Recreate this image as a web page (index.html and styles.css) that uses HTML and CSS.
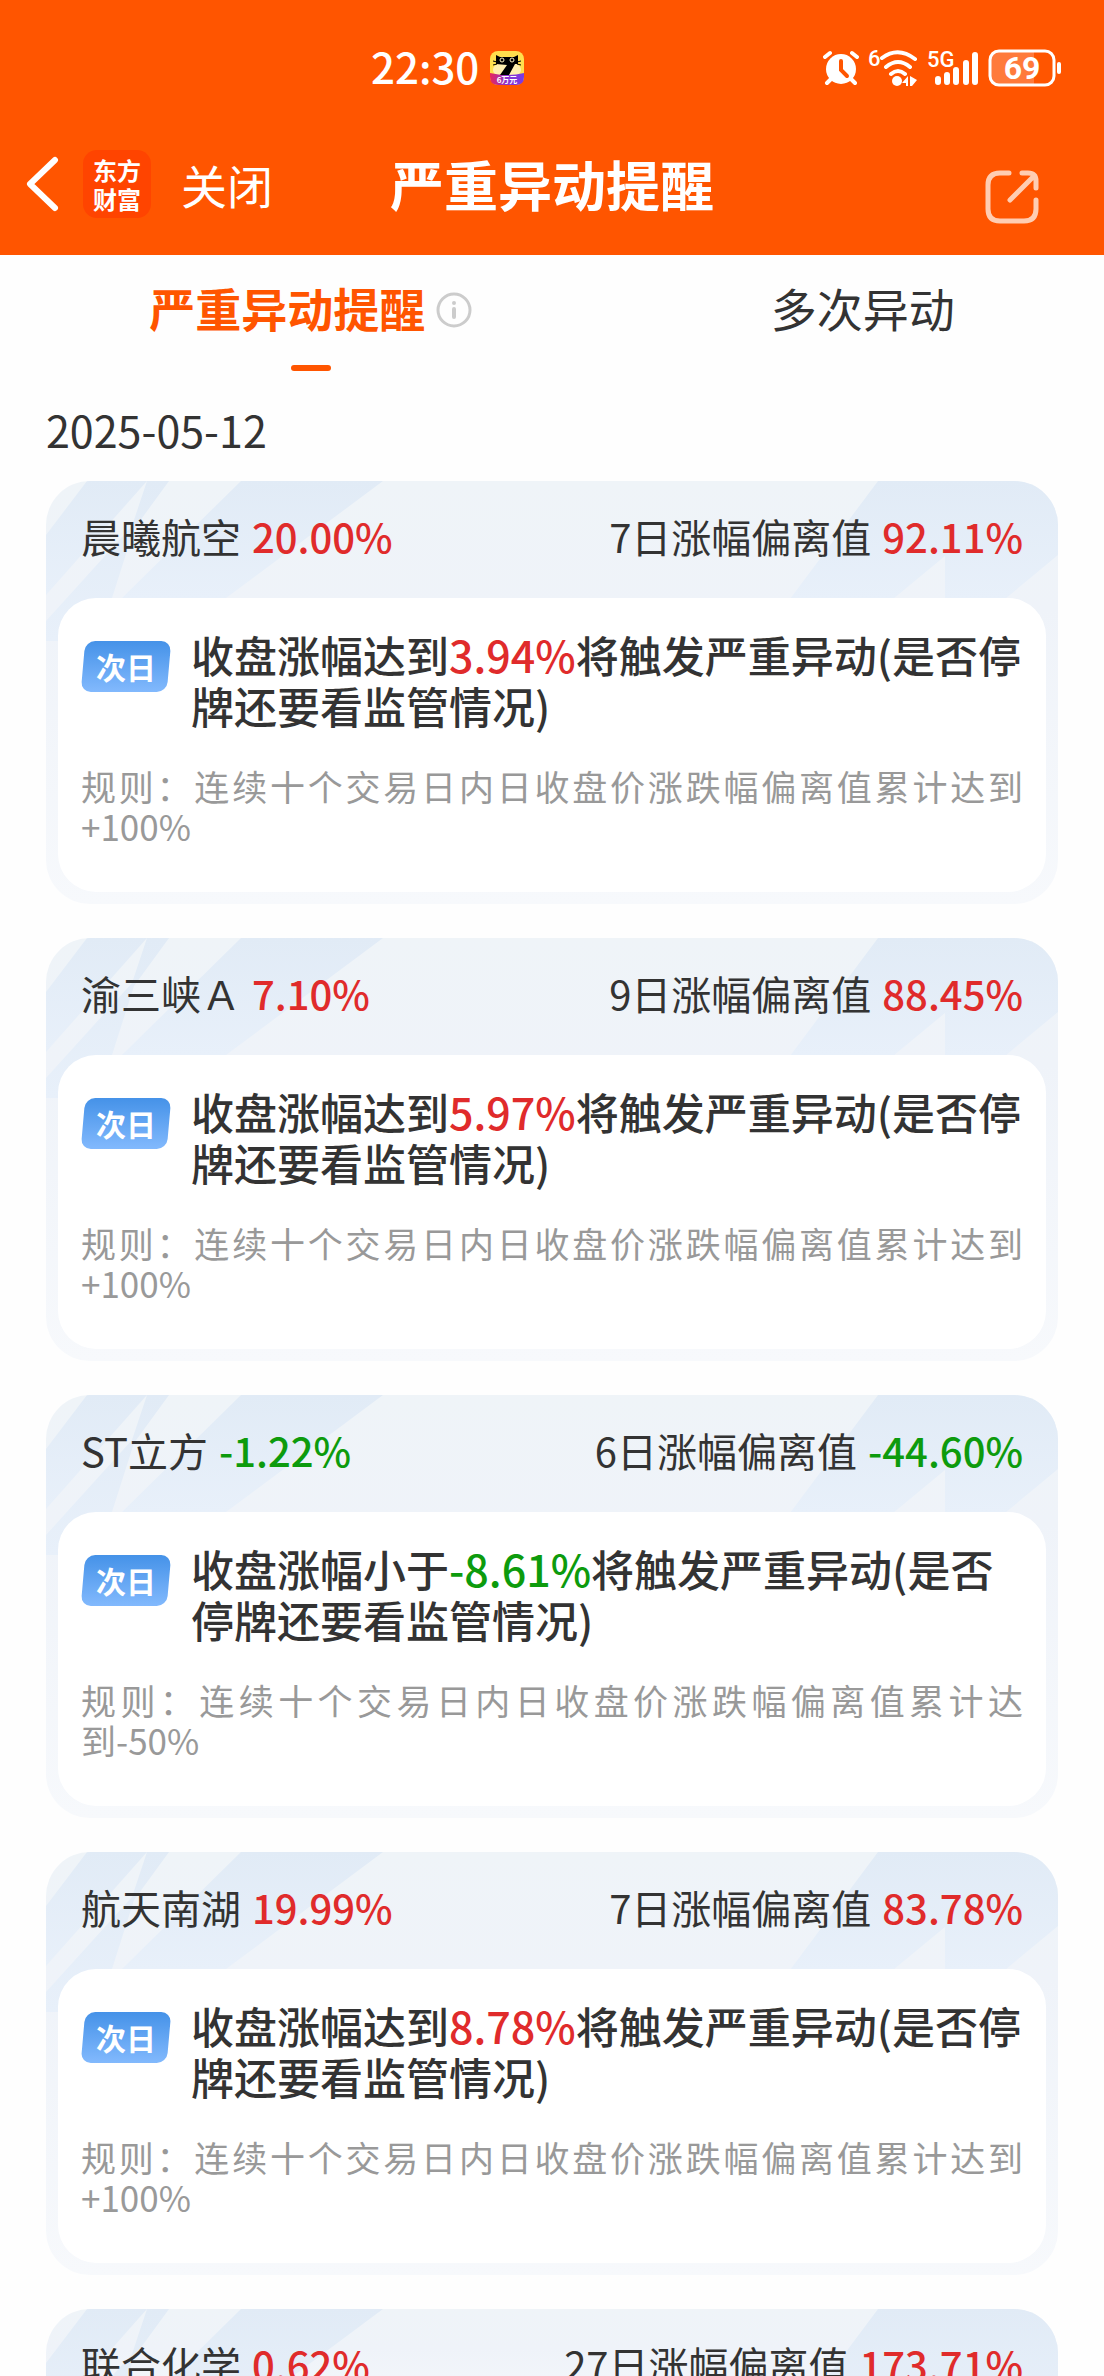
FILE: index.html
```html
<!DOCTYPE html>
<html lang="zh-CN">
<head>
    <meta charset="UTF-8">
    <meta name="viewport" content="width=device-width, initial-scale=1.0">
    <title>严重异动提醒</title>
    <link rel="stylesheet" href="styles.css">
</head>
<body>

<svg class="defs" width="0" height="0" aria-hidden="true">
    <defs>
        <linearGradient id="blue" x1="0" y1="0" x2="0" y2="1">
            <stop offset="0" stop-color="#e1ebf6"/>
            <stop offset="1" stop-color="#e8f0fa"/>
        </linearGradient>
    </defs>
    <symbol id="rays-left" viewBox="0 0 340 160">
        <path fill="url(#blue)" d="M41 0H101L0 114V54Z"/>
        <path fill="url(#blue)" d="M101 0H123L88 48L66 117V160H0V140L86 45Z"/>
        <path fill="url(#blue)" d="M195 0H337L180 117H76Z"/>
    </symbol>
    <symbol id="rays-right" viewBox="0 0 270 160">
        <path fill="url(#blue)" d="M90 0H270V74L217 118H157V75L105 118H2Z"/>
    </symbol>
</svg>

<header class="header">
    <div class="status">
        <div class="status-time">
            <span>22:30</span>
            <svg width="34" height="34" viewBox="0 0 34 34">
                <defs>
                    <linearGradient id="app" x1="0" y1="0" x2="1" y2="0">
                        <stop offset="0" stop-color="#e8265c"/>
                        <stop offset="0.5" stop-color="#8b32d0"/>
                        <stop offset="1" stop-color="#7a3be6"/>
                    </linearGradient>
                </defs>
                <rect width="34" height="34" rx="8" fill="#ffdf4e"/>
                <ellipse cx="17" cy="19" rx="14" ry="8" fill="#ffefb0"/>
                <path d="M0 22Q17 26 34 22V26Q34 34 26 34H8Q0 34 0 26Z" fill="url(#app)"/>
                <path d="M6 4L10 6H24L28 4V13H25L19 24H10L17 14L6 13Z" fill="#000"/>
                <path d="M3 10L7 11M3 14L7 13M31 10L27 11M31 14L27 13" stroke="#000"/>
                <circle cx="12" cy="9" r="2" fill="#000" stroke="#fff3c0"/>
                <circle cx="22" cy="9" r="2" fill="#000" stroke="#fff3c0"/>
                <text class="app-text" x="17" y="32" text-anchor="middle">6万元</text>
            </svg>
        </div>
        <div class="status-icons">
            <svg width="36" height="36" viewBox="0 0 36 36" fill="none" stroke="#fff" stroke-width="4" stroke-linecap="round">
                <circle cx="18" cy="19" r="15" fill="#fff" stroke="none"/>
                <path d="M2 7L7 3M34 7L29 3M8 29L4 33M28 29L32 33"/>
                <path stroke="#ff5500" d="M18 11V20L24 26"/>
            </svg>
            <svg class="wifi" width="50" height="38" viewBox="0 0 50 38" fill="none" stroke="#fff" stroke-width="4">
                <text class="net-text" x="0" y="17">6</text>
                <path stroke-linecap="round" d="M14 9Q30 -3 47 10M18 18Q30 8 42 18M23 25Q30 19 37 25"/>
                <circle cx="29" cy="32" r="5" fill="#fff" stroke="none"/>
                <path fill="#fff" stroke="none" d="M40 27V37H38V34H34ZM42 27L49 31L44 37H42Z"/>
            </svg>
            <svg class="signal" width="52" height="38" viewBox="0 0 52 38" fill="none" stroke="#fff" stroke-width="6" stroke-linecap="round">
                <text class="net-text" x="0" y="18">5G</text>
                <path d="M11 30V33M20 26V33M29 21V33M39 14V33M48 6V33"/>
            </svg>
            <svg width="74" height="38" viewBox="0 0 74 38">
                <path d="M10 1H46V37H10Q2 37 2 29V9Q2 1 10 1Z" fill="#ff7a3b"/>
                <rect x="2" y="2" width="64" height="34" rx="9" fill="none" stroke="#fff" stroke-width="3"/>
                <rect x="69" y="13" width="4" height="12" rx="2" fill="#fff"/>
                <text class="battery-text" x="34" y="30" text-anchor="middle">69</text>
            </svg>
        </div>
    </div>
    <div class="nav">
        <div class="nav-left">
            <button type="button" class="icon-button" aria-label="返回">
                <svg width="34" height="56" viewBox="0 0 34 56" fill="none" stroke="#fff" stroke-width="6" stroke-linecap="round" stroke-linejoin="round">
                    <path d="M29 4L4 28L29 52"/>
                </svg>
            </button>
            <span class="logo">东方<br>财富</span>
            <button type="button" class="close">关闭</button>
        </div>
        <h1 class="title">严重异动提醒</h1>
        <button type="button" class="icon-button share" aria-label="分享">
            <svg width="54" height="54" viewBox="0 0 54 54" fill="none" stroke="#ffcdb2" stroke-width="5" stroke-linecap="round" stroke-linejoin="round">
                <path d="M24 3H15Q3 3 3 15V39Q3 51 15 51H39Q51 51 51 39V30M37 3H43Q51 3 51 11V18M49 6L25 30"/>
            </svg>
        </button>
    </div>
</header>

<nav class="tabs">
    <a href="#" class="tab active">
        <span>严重异动提醒</span>
        <svg width="36" height="36" viewBox="0 0 36 36" fill="none" stroke="#ccc" stroke-width="3">
            <circle cx="18" cy="18" r="16"/>
            <path stroke-width="4" stroke-linecap="round" d="M18 17V25M18 11V11"/>
        </svg>
    </a>
    <a href="#" class="tab"><span>多次异动</span></a>
</nav>

<main class="list">
    <p class="date">2025-05-12</p>

    <article class="card">
        <svg class="rays left"><use href="#rays-left"/></svg>
        <svg class="rays right"><use href="#rays-right"/></svg>
        <div class="card-head">
            <span>晨曦航空 <b class="up">20.00%</b></span>
            <span>7日涨幅偏离值 <b class="up">92.11%</b></span>
        </div>
        <div class="card-body">
            <div class="message">
                <span class="badge">次日</span>
                <p>收盘涨幅达到<b class="up">3.94%</b>将触发严重异动(是否停牌还要看监管情况)</p>
            </div>
            <p class="rule">规则：连续十个交易日内日收盘价涨跌幅偏离值累计达到+100%</p>
        </div>
    </article>

    <article class="card">
        <svg class="rays left"><use href="#rays-left"/></svg>
        <svg class="rays right"><use href="#rays-right"/></svg>
        <div class="card-head">
            <span>渝三峡Ａ <b class="up">7.10%</b></span>
            <span>9日涨幅偏离值 <b class="up">88.45%</b></span>
        </div>
        <div class="card-body">
            <div class="message">
                <span class="badge">次日</span>
                <p>收盘涨幅达到<b class="up">5.97%</b>将触发严重异动(是否停牌还要看监管情况)</p>
            </div>
            <p class="rule">规则：连续十个交易日内日收盘价涨跌幅偏离值累计达到+100%</p>
        </div>
    </article>

    <article class="card">
        <svg class="rays left"><use href="#rays-left"/></svg>
        <svg class="rays right"><use href="#rays-right"/></svg>
        <div class="card-head">
            <span>ST立方 <b class="down">-1.22%</b></span>
            <span>6日涨幅偏离值 <b class="down">-44.60%</b></span>
        </div>
        <div class="card-body">
            <div class="message">
                <span class="badge">次日</span>
                <p>收盘涨幅小于<b class="down">-8.61%</b>将触发严重异动(是否停牌还要看监管情况)</p>
            </div>
            <p class="rule">规则：连续十个交易日内日收盘价涨跌幅偏离值累计达到-50%</p>
        </div>
    </article>

    <article class="card">
        <svg class="rays left"><use href="#rays-left"/></svg>
        <svg class="rays right"><use href="#rays-right"/></svg>
        <div class="card-head">
            <span>航天南湖 <b class="up">19.99%</b></span>
            <span>7日涨幅偏离值 <b class="up">83.78%</b></span>
        </div>
        <div class="card-body">
            <div class="message">
                <span class="badge">次日</span>
                <p>收盘涨幅达到<b class="up">8.78%</b>将触发严重异动(是否停牌还要看监管情况)</p>
            </div>
            <p class="rule">规则：连续十个交易日内日收盘价涨跌幅偏离值累计达到+100%</p>
        </div>
    </article>

    <article class="card">
        <svg class="rays left"><use href="#rays-left"/></svg>
        <svg class="rays right"><use href="#rays-right"/></svg>
        <div class="card-head">
            <span>联合化学 <b class="up">0.62%</b></span>
            <span>27日涨幅偏离值 <b class="up">173.71%</b></span>
        </div>
    </article>
</main>

</body>
</html>
```

FILE: styles.css
```css
* {
    box-sizing: border-box;
}
body {
    margin: 0;
    height: 100vh;
    overflow: hidden;
    background-color: #fefefe;
    color: #333;
    font-family: "Noto Sans CJK SC", sans-serif;
    font-size: 40px;
}
h1, p {
    margin: 0;
}
svg {
    display: block;
    flex: none;
}
.defs {
    position: absolute;
}
button {
    padding: 0;
    border: none;
    background: none;
    color: inherit;
    font-family: inherit;
    cursor: pointer;
}

/* header */
.header {
    background-color: #ff5500;
    color: #fff;
    padding-bottom: 23px;
}
.status {
    display: flex;
    justify-content: space-between;
    align-items: center;
    height: 136px;
    padding: 0 42px 0 371px;
}
.status-time {
    display: flex;
    align-items: center;
    gap: 11px;
    font-size: 42px;
    font-weight: 500;
}
.status-time span {
    padding-bottom: 6px;
}
.status-icons {
    display: flex;
    align-items: center;
    gap: 9px;
}
.net-text {
    font-size: 22px;
    font-weight: 500;
    fill: #fff;
    stroke: none;
    font-family: Roboto, sans-serif;
}
.battery-text {
    font-size: 32px;
    font-weight: 700;
    fill: #fff;
    font-family: Roboto, sans-serif;
}
.app-text {
    font-size: 8px;
    font-weight: 700;
    fill: #fff;
}
.nav {
    display: grid;
    grid-template-columns: 1fr auto 1fr;
    align-items: center;
    height: 96px;
    padding: 0 26px;
}
.nav-left {
    display: flex;
    align-items: center;
}
.logo {
    width: 68px;
    height: 68px;
    margin-left: 23px;
    padding-top: 5px;
    border-radius: 14px;
    background-color: #ff4400;
    font-size: 24px;
    font-weight: 700;
    line-height: 29px;
    text-align: center;
}
.close {
    margin-left: 30px;
    font-size: 46px;
    line-height: 60px;
}
.title {
    font-size: 54px;
    font-weight: 700;
    line-height: 80px;
}
.share {
    justify-self: end;
    margin: 26px 39px 0 0;
}

/* tabs */
.tabs {
    display: flex;
    justify-content: space-around;
    height: 126px;
}
.tab {
    display: flex;
    align-items: center;
    gap: 11px;
    position: relative;
    height: 110px;
    color: #333;
    font-size: 46px;
    text-decoration: none;
}
.tab span {
    padding-bottom: 6px;
}
.tab.active {
    color: #ff5500;
    font-weight: 700;
}
.tab.active::after {
    content: "";
    position: absolute;
    left: 50%;
    bottom: -6px;
    width: 40px;
    height: 6px;
    margin-left: -20px;
    border-radius: 3px;
    background-color: #ff5500;
}

/* list */
.list {
    padding: 0 46px;
}
.date {
    height: 100px;
    font-size: 43px;
    line-height: 96px;
}
.card {
    position: relative;
    overflow: hidden;
    margin-bottom: 34px;
    padding: 0 12px 12px;
    border-radius: 44px;
    background: linear-gradient(#eff4f8, #eff3f9 30%, #f7f9fc);
}
.rays {
    position: absolute;
    top: 0;
    height: 160px;
}
.rays.left {
    left: 0;
    width: 340px;
}
.rays.right {
    right: 0;
    width: 270px;
}
.card-head {
    position: relative;
    display: flex;
    justify-content: space-between;
    align-items: center;
    height: 117px;
    padding: 0 23px 8px;
}
.card-head b, .message b {
    font-weight: 500;
}
.card-head b {
    margin-left: 2px;
}
.card-body {
    position: relative;
    padding: 31px 23px 46px;
    border-radius: 38px;
    background-color: #fff;
}
.message {
    display: flex;
    align-items: flex-start;
    gap: 20px;
    font-size: 43px;
    font-weight: 500;
    line-height: 51px;
}
.badge {
    position: relative;
    z-index: 0;
    flex: none;
    width: 90px;
    margin-top: 12px;
    color: #fff;
    font-size: 30px;
    font-weight: 700;
    text-align: center;
}
.badge::before {
    content: "";
    position: absolute;
    inset: 0 2px;
    z-index: -1;
    border-radius: 10px;
    background: linear-gradient(#4592e8, #82b9fd);
    transform: skewX(-5deg);
}
.rule {
    margin-top: 35px;
    color: #999;
    font-size: 35px;
    line-height: 40px;
    text-align: justify;
}
.up {
    color: #e02b2b;
}
.down {
    color: #0d9b0d;
}
```
